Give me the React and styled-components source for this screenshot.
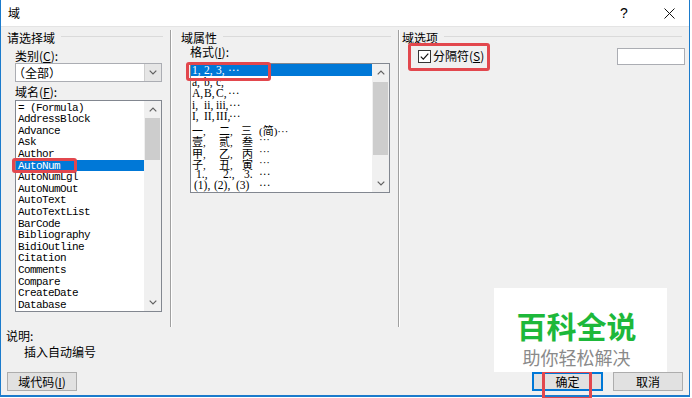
import React from 'react';
import styled, { createGlobalStyle } from 'styled-components';

const UI = `"Noto Sans CJK SC", "Liberation Sans", sans-serif`;
const MONO = `"Liberation Mono", "Noto Sans CJK SC", monospace`;
const SERIF = `"Liberation Serif", "Noto Sans CJK SC", serif`;
const BLUE = '#0078d7';
const RED = '#e2474d';

const Global = createGlobalStyle`
  html, body { margin: 0; padding: 0; background: #fff; }
  body { width: 692px; height: 398px; overflow: hidden; }
  * { box-sizing: border-box; }
`;

const Window = styled.div`
  position: relative;
  width: 690px;
  height: 397px;
  display: flex;
  flex-direction: column;
  background: #f0f0f0;
  border-left: 1px solid #1b7bcc;
  border-right: 1px solid #1b7bcc;
  border-bottom: 2px solid #1b7bcc;
  font: 12px/14px ${UI};
  color: #000;
`;

const TitleBar = styled.div`
  flex: none;
  height: 27px;
  display: flex;
  align-items: center;
  padding-left: 7px;
  background: #fff;
  border-bottom: 1px solid #e4e4e4;
`;

const TitleText = styled.span`
  flex: 1;
  font-size: 12px;
`;

const TitleBtn = styled.span`
  width: 40px;
  margin-left: ${p => p.$ml || 0}px;
  display: flex;
  align-items: center;
  justify-content: center;
  font: 14px "Liberation Sans", sans-serif;
`;

const Main = styled.div`
  flex: none;
  height: 300px;
  display: grid;
  grid-template-columns: 170px 228px 1fr;
`;

const Column = styled.div`
  margin-top: 3px;
  padding: 1px 0 0 ${p => p.$pl}px;
  border-right: ${p => (p.$last ? 'none' : '1px solid #a0a0a0')};
  box-shadow: ${p => (p.$last ? 'none' : '1px 0 0 #ffffff')};
  display: flex;
  flex-direction: column;
`;

const Legend = styled.div`
  display: flex;
  align-items: center;
  height: 14px;
  margin-right: 7px;
  white-space: nowrap;
  &::after {
    content: '';
    flex: 1;
    height: 1px;
    margin: -3px 0 0 6px;
    background: #dadada;
  }
`;

const Indent = styled.div`
  padding-left: ${p => p.$pl}px;
  display: flex;
  flex-direction: column;
`;

const FieldLabel = styled.div`
  margin-top: ${p => p.$mt || 0}px;
  height: 14px;
  white-space: nowrap;
`;

const U = styled.span`
  text-decoration: underline;
  text-underline-offset: 1px;
`;

const Combo = styled.div`
  width: 147px;
  height: 19px;
  margin-top: 0.5px;
  display: flex;
  background: #fff;
  border: 1px solid #abadb3;
`;

const ComboText = styled.span`
  flex: 1;
  line-height: 17px;
  margin-left: -3px;
`;

const ComboBtn = styled.span`
  width: 17px;
  display: flex;
  align-items: center;
  justify-content: center;
  background: #e6e6e6;
  border-left: 1px solid #cfcfcf;
`;

const ListBox = styled.div`
  position: relative;
  display: flex;
  width: ${p => p.$w}px;
  height: ${p => p.$h}px;
  margin-top: ${p => p.$mt}px;
  background: #fff;
  border: 1px solid #828790;
`;

const Items = styled.div`
  flex: 1;
  min-width: 0;
  padding-top: ${p => p.$pt || 0}px;
`;

const NameItem = styled.div`
  position: relative;
  height: 11.6px;
  line-height: 11.6px;
  padding-left: 2px;
  white-space: nowrap;
  font: 11px ${MONO};
  letter-spacing: -0.6px;
  background: ${p => (p.$sel ? BLUE : 'transparent')};
  color: ${p => (p.$sel ? '#fff' : '#000')};
`;

const FmtRow = styled.div`
  position: relative;
  display: flex;
  height: 11.5px;
  line-height: 11.5px;
  padding-left: 1px;
  white-space: nowrap;
  font: 11px ${SERIF};
  background: ${p => (p.$sel ? BLUE : 'transparent')};
  color: ${p => (p.$sel ? '#fff' : '#000')};
`;

const Tok = styled.span`
  flex: none;
  width: ${p => (p.$w ? `${p.$w}px` : 'auto')};
  padding-left: ${p => p.$pl || 0}px;
  font-size: ${p => (p.$cjk ? 11 : 11.5)}px;
`;

const ScrollBar = styled.div`
  flex: none;
  width: 17px;
  display: flex;
  flex-direction: column;
  background: #f0f0f0;
`;

const ScrollBtn = styled.div`
  flex: none;
  height: 17px;
  display: flex;
  align-items: center;
  justify-content: center;
`;

const Track = styled.div`
  flex: 1;
`;

const Thumb = styled.div`
  margin: ${p => p.$top}px 1px 0;
  height: ${p => p.$h}px;
  background: #cdcdcd;
`;

const Mark = styled.span`
  position: absolute;
  left: ${p => p.$l}px;
  top: ${p => p.$t}px;
  width: ${p => p.$w}px;
  height: ${p => p.$h}px;
  border: 3px solid ${RED};
  border-radius: 3px;
  pointer-events: none;
  z-index: 2;
`;

const CheckGroup = styled.div`
  position: relative;
  margin-top: 2px;
  height: 18px;
  display: flex;
  align-items: center;
  padding-left: 16px;
`;

const CheckBox = styled.span`
  width: 13px;
  height: 13px;
  margin-right: 2px;
  display: flex;
  align-items: center;
  justify-content: center;
  background: #fff;
  border: 1px solid #333;
`;

const TextInput = styled.span`
  margin-left: auto;
  margin-right: 4px;
  width: 68px;
  height: 17px;
  background: #fff;
  border: 1px solid #abadb3;
`;

const Footer = styled.div`
  flex: 1;
  padding: 2px 6px 0 5px;
  display: flex;
  flex-direction: column;
`;

const Desc = styled.div`
  margin-top: 2px;
  padding-left: 18px;
  height: 14px;
`;

const ButtonRow = styled.div`
  margin-top: 13px;
  display: flex;
  gap: 10px;
  padding-left: 1px;
`;

const Button = styled.div`
  position: relative;
  width: ${p => p.$w}px;
  height: 19px;
  margin-left: ${p => (p.$push ? 'auto' : '0')};
  display: flex;
  align-items: center;
  justify-content: center;
  background: #e1e1e1;
  border: 1px solid ${p => (p.$default ? BLUE : '#adadad')};
  box-shadow: ${p => (p.$default ? `inset 0 0 0 1px ${BLUE}` : 'none')};
`;

const Watermark = styled.div`
  position: absolute;
  left: 493px;
  top: 288px;
  width: 173px;
  height: 84px;
  padding: 18px 8px 0 0;
  display: flex;
  flex-direction: column;
  align-items: center;
  background: #fff;
  z-index: 5;
`;

const WmTitle = styled.div`
  font: 700 30px/38px ${UI};
  color: #1db83a;
`;

const WmSub = styled.div`
  margin-top: 3px;
  font: 18px/20px ${UI};
  color: #8a8a8a;
`;

const Chevron = ({ up }) => (
  <svg width="8" height="5" viewBox="0 0 8 5">
    <path
      d={up ? 'M0.7 4.3 L4 1 L7.3 4.3' : 'M0.7 0.7 L4 4 L7.3 0.7'}
      fill="none"
      stroke="#606060"
      strokeWidth="1.2"
    />
  </svg>
);

const names = [
  '= (Formula)', 'AddressBlock', 'Advance', 'Ask', 'Author', 'AutoNum',
  'AutoNumLgl', 'AutoNumOut', 'AutoText', 'AutoTextList', 'BarCode',
  'Bibliography', 'BidiOutline', 'Citation', 'Comments', 'Compare',
  'CreateDate', 'Database',
];

const formats = [
  { sel: true, t: [['1,', 12], ['2,', 12], ['3,', 12], ['···']] },
  { t: [['a,', 12], ['b,', 12], ['c,', 12]] },
  { t: [['A,', 12], ['B,', 12], ['C,', 12], ['···']] },
  { t: [['i,', 12], ['ii,', 12], ['iii,', 13], ['···']] },
  { t: [['I,', 12], ['II,', 12], ['III,', 13], ['···']] },
  { cjk: true, t: [['一,', 27], ['二,', 22], ['三', 18], ['(简)···']] },
  { cjk: true, t: [['壹,', 27], ['贰,', 23], ['叁', 17], ['···']] },
  { cjk: true, t: [['甲,', 27], ['乙,', 23], ['丙', 17], ['···']] },
  { cjk: true, t: [['子,', 27], ['丑,', 23], ['寅', 17], ['···']] },
  { t: [['1.,', 31, 4], ['2.,', 21], ['3.', 15], ['···']] },
  { t: [['(1),', 22, 2], ['(2),', 22], ['(3)', 23], ['···']] },
];

export default function App() {
  return (
    <>
      <Global />
      <Window>
        <TitleBar>
          <TitleText>域</TitleText>
          <TitleBtn>?</TitleBtn>
          <TitleBtn $ml={5}>
            <svg width="11" height="11" viewBox="0 0 11 11">
              <path d="M0.5 0.5 L10.5 10.5 M10.5 0.5 L0.5 10.5" stroke="#111" strokeWidth="1" />
            </svg>
          </TitleBtn>
        </TitleBar>

        <Main>
          <Column $pl={6}>
            <Legend>请选择域</Legend>
            <Indent $pl={8}>
              <FieldLabel $mt={3.5}>类别(<U>C</U>):</FieldLabel>
              <Combo>
                <ComboText>（全部）</ComboText>
                <ComboBtn><Chevron /></ComboBtn>
              </Combo>
              <FieldLabel $mt={3}>域名(<U>F</U>):</FieldLabel>
              <ListBox $w={147} $h={212} $mt={1}>
                <Items $pt={0.7}>
                  {names.map(n => (
                    <NameItem key={n} $sel={n === 'AutoNum'}>
                      {n}
                      {n === 'AutoNum' && <Mark $l={-4} $t={-2} $w={65} $h={15} />}
                    </NameItem>
                  ))}
                </Items>
                <ScrollBar>
                  <ScrollBtn><Chevron up /></ScrollBtn>
                  <Track><Thumb $top={0} $h={42} /></Track>
                  <ScrollBtn><Chevron /></ScrollBtn>
                </ScrollBar>
              </ListBox>
            </Indent>
          </Column>

          <Column $pl={10}>
            <Legend>域属性</Legend>
            <Indent $pl={9}>
              <FieldLabel>格式(<U>I</U>):</FieldLabel>
              <ListBox $w={200} $h={130} $mt={4}>
                <Items>
                  {formats.map((r, i) => (
                    <FmtRow key={i} $sel={r.sel}>
                      {r.t.map(([txt, w, pl], j) => (
                        <Tok key={j} $w={w} $pl={pl} $cjk={r.cjk}>{txt}</Tok>
                      ))}
                      {r.sel && <Mark $l={-5} $t={-2} $w={85} $h={19} />}
                    </FmtRow>
                  ))}
                </Items>
                <ScrollBar>
                  <ScrollBtn><Chevron up /></ScrollBtn>
                  <Track><Thumb $top={1} $h={73} /></Track>
                  <ScrollBtn><Chevron /></ScrollBtn>
                </ScrollBar>
              </ListBox>
            </Indent>
          </Column>

          <Column $pl={3} $last>
            <Legend>域选项</Legend>
            <CheckGroup>
              <CheckBox>
                <svg width="11" height="11" viewBox="0 0 11 11">
                  <path d="M1.8 5.6 L4.3 8.1 L9.3 2.6" fill="none" stroke="#111" strokeWidth="1.2" />
                </svg>
              </CheckBox>
              <span>分隔符(<U>S</U>)</span>
              <TextInput />
              <Mark $l={6} $t={-4} $w={82} $h={28} />
            </CheckGroup>
          </Column>
        </Main>

        <Footer>
          <FieldLabel>说明:</FieldLabel>
          <Desc>插入自动编号</Desc>
          <ButtonRow>
            <Button $w={70}>域代码(<U>I</U>)</Button>
            <Button $w={71} $push $default>
              确定
              <Mark $l={9} $t={-3} $w={50} $h={30} />
            </Button>
            <Button $w={70}>取消</Button>
          </ButtonRow>
        </Footer>

        <Watermark>
          <WmTitle>百科全说</WmTitle>
          <WmSub>助你轻松解决</WmSub>
        </Watermark>
      </Window>
    </>
  );
}
